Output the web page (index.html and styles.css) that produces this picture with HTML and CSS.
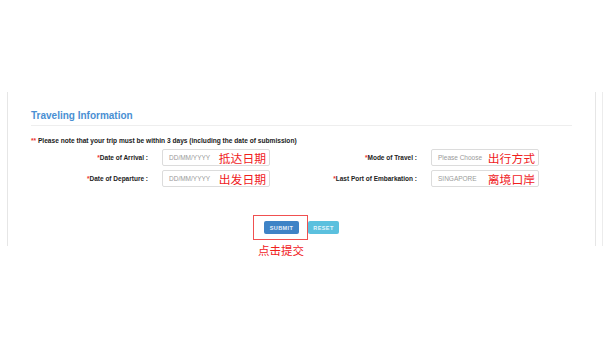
FILE: index.html
```html
<!DOCTYPE html>
<html lang="en">
<head>
  <meta charset="UTF-8">
  <meta name="viewport" content="width=device-width, initial-scale=1.0">
  <title>Traveling Information</title>
  <link rel="stylesheet" href="styles.css">
</head>
<body>
  <div class="outer">
    <div class="panel">
      <h2 class="title">Traveling Information</h2>
      <p class="note"><span class="req">**</span> Please note that your trip must be within 3 days (including the date of submission)</p>

      <div class="fields">
        <div class="field">
          <label class="label"><span class="req">*</span>Date of Arrival :</label>
          <div class="input"><span class="placeholder">DD/MM/YYYY</span><span class="tag">抵达日期</span></div>
        </div>
        <div class="field">
          <label class="label"><span class="req">*</span>Mode of Travel :</label>
          <div class="input"><span class="placeholder">Please Choose</span><span class="tag">出行方式</span></div>
        </div>
        <div class="field">
          <label class="label"><span class="req">*</span>Date of Departure :</label>
          <div class="input"><span class="placeholder">DD/MM/YYYY</span><span class="tag">出发日期</span></div>
        </div>
        <div class="field">
          <label class="label"><span class="req">*</span>Last Port of Embarkation :</label>
          <div class="input"><span class="placeholder">SINGAPORE</span><span class="tag">离境口岸</span></div>
        </div>
      </div>

      <div class="actions">
        <div class="submit-wrap">
          <button class="btn btn-submit">SUBMIT</button>
          <div class="mark"></div>
          <span class="mark-text">点击提交</span>
        </div>
        <button class="btn btn-reset">RESET</button>
      </div>
    </div>
  </div>
</body>
</html>
```

FILE: styles.css
```css
html, body {
  min-height: 339px;
}
body {
  margin: 0;
  font-family: "Liberation Sans", Arial, sans-serif;
  color: #333;
  background: #fff;
}
.outer {
  margin: 92px 0 0 7px;
  border-right: 1px solid #ececec;
}
.panel {
  margin-right: 6px;
  height: 154px;
  padding: 18px 23px 0 23px;
  box-sizing: border-box;
  border-left: 1px solid #e6e6e6;
  border-right: 1px solid #e6e6e6;
}
.title {
  margin: 0;
  font-size: 10px;
  line-height: 12px;
  font-weight: bold;
  color: #4a8fd3;
  padding-bottom: 3px;
  border-bottom: 1px solid #eeeeee;
}
.note {
  margin: 10px 0 0 0;
  font-size: 6.6px;
  line-height: 9px;
  font-weight: bold;
  color: #1a1a1a;
}
.req {
  color: #e33;
}
.fields {
  display: grid;
  grid-template-columns: 269px 1fr;
  row-gap: 4px;
  margin-top: 4px;
}
.field {
  display: flex;
  align-items: center;
}
.label {
  width: 117px;
  margin-right: 14px;
  text-align: right;
  font-size: 6.5px;
  font-weight: bold;
  color: #222;
}
.input {
  width: 108px;
  height: 17px;
  box-sizing: border-box;
  border: 1px solid #dcdcdc;
  border-radius: 2px;
  display: flex;
  align-items: center;
  padding: 0 3px 0 6px;
}
.placeholder {
  font-size: 6.5px;
  color: #9a9a9a;
}
.tag {
  margin-left: auto;
  font-family: "Noto Sans CJK SC", sans-serif;
  font-size: 11.8px;
  line-height: 12px;
  color: #f0201c;
}
.actions {
  display: flex;
  justify-content: center;
  gap: 9px;
  margin-top: 34px;
}
.submit-wrap {
  position: relative;
}
.btn {
  height: 13px;
  border: none;
  border-radius: 2px;
  font-family: "Liberation Sans", Arial, sans-serif;
  font-size: 5.5px;
  font-weight: bold;
  letter-spacing: 0.4px;
  padding: 0;
  display: block;
}
.btn-submit {
  width: 35px;
  background: #3e83c6;
  color: #e8f0fa;
}
.btn-reset {
  width: 31px;
  background: #5bc0de;
  color: #e6f5fb;
}
.mark {
  position: absolute;
  left: -11px;
  top: -6px;
  width: 55px;
  height: 25px;
  box-sizing: border-box;
  border: 1px solid #f05050;
}
.mark-text {
  position: absolute;
  left: -6px;
  top: 22px;
  white-space: nowrap;
  font-family: "Noto Sans CJK SC", sans-serif;
  font-size: 11.5px;
  line-height: 14px;
  color: #f0201c;
}
```
